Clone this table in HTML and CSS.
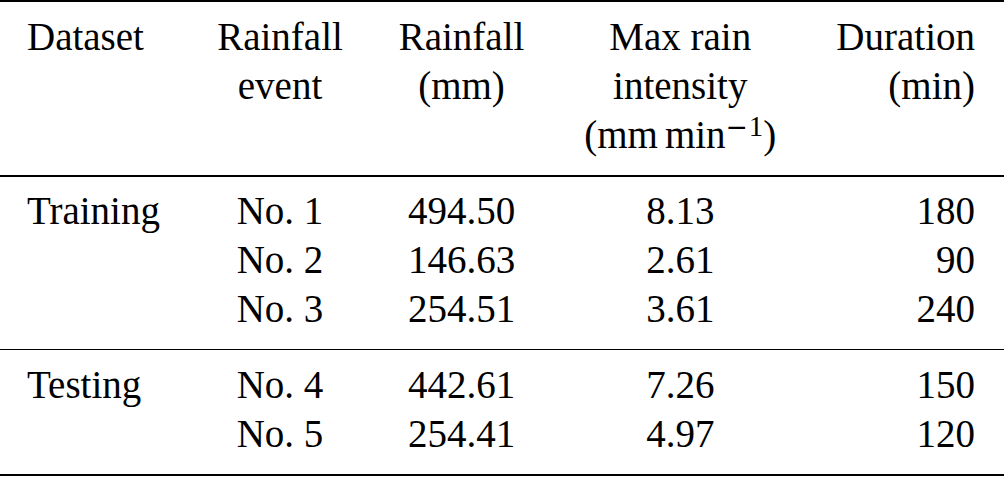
FILE: index.html
```html
<!DOCTYPE html>
<html lang="en">
<head>
<meta charset="utf-8">
<title>Rainfall events</title>
<link rel="stylesheet" href="styles.css">
</head>
<body>
<table class="data">
  <colgroup>
    <col class="c1"><col class="c2"><col class="c3"><col class="c4"><col class="c5">
  </colgroup>
  <thead>
    <tr class="first last">
      <th class="left">Dataset</th>
      <th class="center">Rainfall<br>event</th>
      <th class="center">Rainfall<br>(mm)</th>
      <th class="center">Max rain<br>intensity<br>(mm<span class="thin"></span>min<sup><span class="minus">−</span>1</sup>)</th>
      <th class="right">Duration<br>(min)</th>
    </tr>
  </thead>
  <tbody class="group">
    <tr class="first">
      <td class="left">Training</td><td class="center">No. 1</td><td class="center">494.50</td><td class="center">8.13</td><td class="right">180</td>
    </tr>
    <tr>
      <td class="left"></td><td class="center">No. 2</td><td class="center">146.63</td><td class="center">2.61</td><td class="right">90</td>
    </tr>
    <tr class="last">
      <td class="left"></td><td class="center">No. 3</td><td class="center">254.51</td><td class="center">3.61</td><td class="right">240</td>
    </tr>
  </tbody>
  <tbody class="group mid">
    <tr class="first">
      <td class="left">Testing</td><td class="center">No. 4</td><td class="center">442.61</td><td class="center">7.26</td><td class="right">150</td>
    </tr>
    <tr class="last">
      <td class="left"></td><td class="center">No. 5</td><td class="center">254.41</td><td class="center">4.97</td><td class="right">120</td>
    </tr>
  </tbody>
</table>
</body>
</html>
```

FILE: styles.css
```css
html, body {
  margin: 0;
  padding: 0;
  background: #ffffff;
}

.data {
  width: 1004px;
  border-collapse: collapse;
  table-layout: fixed;
  font-family: "Liberation Serif", "Times New Roman", serif;
  font-size: 39px;
  line-height: 49px;
  color: #000000;
}

.c1 { width: 189.5px; }
.c2 { width: 181px; }
.c3 { width: 182px; }
.c4 { width: 255.5px; }
.c5 { width: 196px; }

.data th,
.data td {
  font-weight: normal;
  vertical-align: top;
  padding: 0 29px 0 27px;
  white-space: nowrap;
}

.data .left { text-align: left; }
.data .center { text-align: center; padding-left: 0; padding-right: 0; }
.data .right { text-align: right; }

.data thead {
  border-top: 2px solid #000;
  border-bottom: 2px solid #000;
}

.data tbody.mid {
  border-top: 1.5px solid #000;
  border-bottom: 2px solid #000;
}

.data tr.first > * { padding-top: 9.5px; }
.data tr.last > * { padding-bottom: 16px; }

.thin {
  display: inline-block;
  width: 7px;
}

.data sup {
  font-size: 0.74em;
  line-height: 0;
  vertical-align: 12px;
}

.minus {
  font-family: "DejaVu Serif", serif;
  font-size: 0.92em;
  margin-right: 1px;
}
```
